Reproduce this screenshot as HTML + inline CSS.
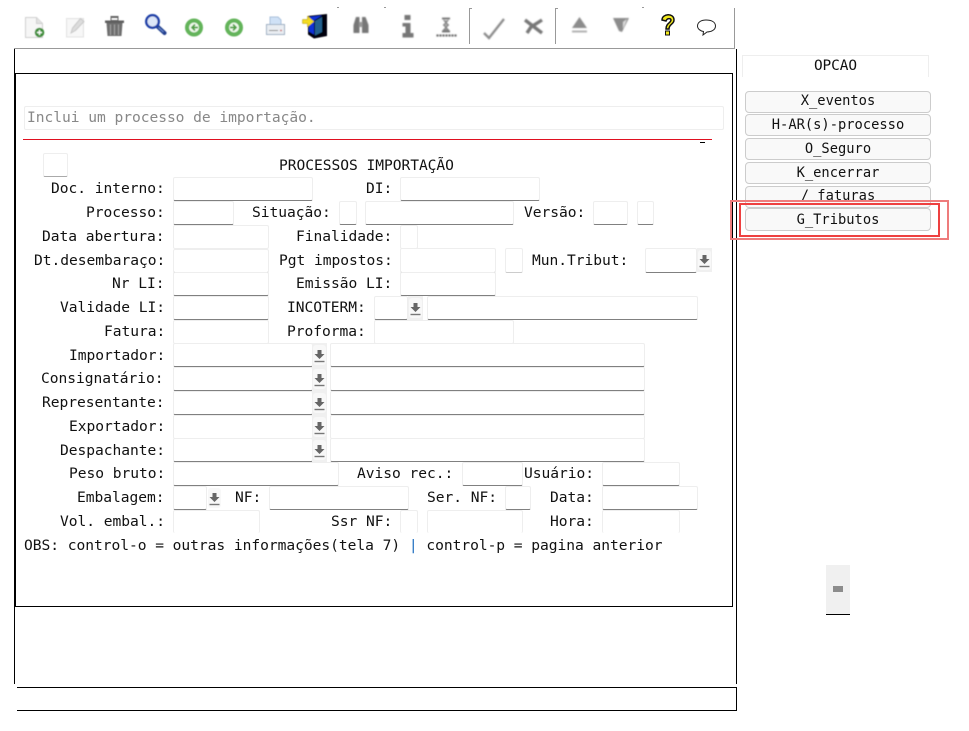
<!DOCTYPE html>
<html lang="pt"><head><meta charset="utf-8"><title>Processos Importação</title>
<style>
html,body{margin:0;padding:0;background:#fff}
#p{position:relative;width:969px;height:731px;overflow:hidden;background:#fff;font-family:"DejaVu Sans Mono","Liberation Mono",monospace;font-size:14.6px;letter-spacing:-.04px;color:#111}
#p div,#p span,#p svg{position:absolute;box-sizing:border-box}
.t{white-space:pre;line-height:18px;height:18px;margin-top:1px}
.f{background:#fff;border:1px solid #eee;border-radius:2px;border-bottom:1px solid #808080}
.l{border-bottom:1px solid #eee}
.n{border-bottom:0}
.b{background:#f0f0f0}
.b i{position:absolute;left:1px;top:2px;right:1px;bottom:2px;background:#f8f8f8;border-radius:3px}
.b svg{left:2px;top:6px}
.o{left:745px;width:186px;background:#f9f9f9;border:1px solid #ccc;border-radius:4px;text-align:center;font-size:13.75px;letter-spacing:0;height:22px}
.k{background:#000}
</style></head><body><div id="p">
<svg width="969" height="731" style="left:0;top:0" viewBox="0 0 969 731">
<defs>
<filter id="bl"><feGaussianBlur stdDeviation=".8"/></filter>
<filter id="bs"><feGaussianBlur stdDeviation=".4"/></filter>
<symbol id="dn" viewBox="0 0 11 14"><path d="M3.500 1h4v4h3L5.500 10 .5 5h3z" fill="#666"/><path d="M.5 12.500h10" stroke="#777" stroke-width="1.400"/></symbol>
</defs>
<g filter="url(#bs)">
<path d="M25.500 17.500h11l6 6v14h-17z" fill="#f6f6f6" stroke="#cfcfcf"/><path d="M36.500 17.500v6h6" fill="#e2e2e2" stroke="#cfcfcf"/>
<circle cx="39.500" cy="32.500" r="4.800" fill="#3f8f3a"/><path d="M37 32.500h5M39.500 30v5" stroke="#fff" stroke-width="1.400"/>
<path d="M66.500 18.500h17v18.500h-17z" fill="#f7f7f7" stroke="#e2e2e2"/><path d="M71 33l1.500-5 8-9.500 3.500 3-8.500 9z" fill="#dcdcdc" stroke="#c8c8c8"/>
<path d="M105 20.500h19v2.500h-19zM110.500 16h8v2h-8z" fill="#5f5f5f"/><path d="M111 17.500h7v3h-7z" fill="none" stroke="#666"/><path d="M106.500 23h16l-1 13h-14z" fill="#6e6e6e"/><path d="M110.500 24.500v10.500M114.500 24.500v10.500M118.500 24.500v10.500" stroke="#a4a4a4"/>
<path d="M157.500 26.500l7 6.500" stroke="#24408e" stroke-width="4" stroke-linecap="round"/><path d="M158.500 27.500l5 4.500" stroke="#6f8fd8" stroke-width="1"/><circle cx="152.500" cy="21.500" r="6.300" fill="#dce6f8" stroke="#1f3fa8" stroke-width="2.400"/>
<circle cx="194" cy="27.500" r="9" fill="#64b45a"/><circle cx="194" cy="27.500" r="5" fill="#eef8ea"/><path d="M198 27.500h-6M195 24.500l-3 3 3 3" stroke="#4f9e44" stroke-width="1.700" fill="none"/>
<circle cx="234" cy="27.500" r="9" fill="#64b45a"/><circle cx="234" cy="27.500" r="5" fill="#eef8ea"/><path d="M230 27.500h6M233 24.500l3 3-3 3" stroke="#4f9e44" stroke-width="1.700" fill="none"/>
<path d="M270 17h8l3 3v6h-11z" fill="#cfe1f6" stroke="#a9c0dc"/><path d="M266.500 24.500h18v10h-18z" fill="#e9edf2" stroke="#9fb0c4"/><path d="M269 30.500h9" stroke="#8a8a8a"/><path d="M280 30.500h2" stroke="#c66" stroke-width="1.300"/>
<path d="M308 16l19-2v22l-13 2.500-6-4z" fill="#06060c"/><path d="M309 17l13-1.500-8 5v14l-5-3z" fill="#0a30d8"/><path d="M315 21l7-4v15l-7 3.500z" fill="#23608f"/>
<path d="M302.500 19.500h5v-3.500l6.500 5.500-6.500 5.500v-3.500h-5z" fill="#f4dc20" stroke="#a89010" stroke-width=".5"/>
</g>
<g filter="url(#bl)" fill="#777">
<path d="M353.500 25l2.500-8h3.500v16h-6zM362 17h3.500l3 8v8h-6.500z"/><path d="M359 22h3.500v5h-3.500z" fill="#999"/>
<path d="M404.500 15h6v5h-6zM402.500 23h8v10h3v4.500h-11v-4.500h3v-6.500h-3z"/>
<path d="M442 18.500h8M442 31.500h8" stroke="#555" stroke-width="1.500" fill="none"/><path d="M443.500 20l5 5-5 5h5l-5-5 5-5" stroke="#777" fill="#aaa"/>
<path d="M436.500 35.500h21" stroke="#555" stroke-width="2" stroke-dasharray="2 1" fill="none"/>
<path d="M484 33l5 5 15-19" stroke="#8a8a8a" stroke-width="2.300" fill="none"/>
<path d="M525 20l17 13M527 33l4-6 11-7" stroke="#777" stroke-width="3.400" fill="none"/>
<path d="M579.500 17l7.500 11h-15z" fill="#8c8c8c"/><path d="M572 31.500h15" stroke="#b0b0b0" stroke-width="2"/>
<path d="M613 18h16l-7 14-3-1z" fill="#8c8c8c"/><path d="M623 22l4-3-4 10z" fill="#ddd"/>
</g>
<path d="M662 20c0-6.500 12-7.500 12 0 0 4.500-5 4-5 9h-3c0-6 5-6 5-9 0-2-4-2-5 1z" fill="#f2e91c" stroke="#111" stroke-width="1.500"/><path d="M665.500 31h4v4h-4z" fill="#f2e91c" stroke="#111"/>
<path d="M706 20c5.500 0 9.500 2 9.500 6s-4.500 6-8.500 6l-4 3 .5-3.500c-3-.5-6-2.500-6-5.500 0-4 4-6 8.500-6z" fill="#fff" stroke="#222"/>
<g fill="none" stroke="#999">
<path d="M14 48.500h720M734.500 8v41M469.500 8v36M470 8.500h2M555.500 8v36M556 8.500h2" />
</g>
<path d="M337 7.500h2M384 7.500h2M642 7.500h2" stroke="#999"/>
</svg>
<div class="k" style="left:14px;top:49px;width:1px;height:635px"></div>
<div class="k" style="left:736px;top:49px;width:1px;height:635px"></div>
<div style="left:15px;top:73px;width:718px;height:534px;border:1px solid #000"></div>
<div class="k" style="left:17px;top:687px;width:720px;height:1px"></div>
<div class="k" style="left:17px;top:710px;width:720px;height:1px"></div>
<div class="k" style="left:736px;top:687px;width:1px;height:24px"></div>

<div style="left:24px;top:106px;width:700px;height:24px;border:1px solid #eee;border-radius:2px"></div>
<div class="t" style="left:27px;top:108px;color:#888">Inclui um processo de importação.</div>
<div style="left:23px;top:139px;width:689px;height:1px;background:#e01020"></div>
<div class="k" style="left:700px;top:142px;width:5px;height:1px"></div>

<div class="f" style="left:43px;top:153px;width:25px;height:24px;border-bottom:1px solid #aaa"></div>
<div class="t" style="left:279px;top:156px">PROCESSOS IMPORTAÇÃO</div>

<div class="f" style="left:173px;top:177px;width:140px;height:24px"></div>
<div class="f" style="left:400px;top:177px;width:140px;height:24px"></div>
<div class="f" style="left:173px;top:201px;width:61px;height:24px"></div>
<div class="f" style="left:339px;top:201px;width:18px;height:24px"></div>
<div class="f" style="left:365px;top:201px;width:149px;height:24px"></div>
<div class="f" style="left:593px;top:201px;width:35px;height:24px"></div>
<div class="f" style="left:637px;top:201px;width:17px;height:24px"></div>
<div class="f l" style="left:173px;top:225px;width:96px;height:24px"></div>
<div class="f l" style="left:400px;top:225px;width:18px;height:24px"></div>
<div class="f" style="left:173px;top:249px;width:96px;height:24px"></div>
<div class="f" style="left:400px;top:248px;width:96px;height:25px"></div>
<div class="f" style="left:505px;top:248px;width:18px;height:25px;border-bottom:1px solid #ccc"></div>
<div class="f" style="left:645px;top:248px;width:52px;height:25px"></div>
<div class="b" style="left:697px;top:248px;width:15px;height:24px"><i></i><svg width="11" height="14"><use href="#dn"/></svg></div>
<div class="f" style="left:173px;top:272px;width:96px;height:24px"></div>
<div class="f" style="left:400px;top:272px;width:96px;height:24px"></div>
<div class="f" style="left:173px;top:296px;width:96px;height:24px"></div>
<div class="f" style="left:374px;top:296px;width:34px;height:24px"></div>
<div class="b" style="left:408px;top:296px;width:15px;height:24px"><i></i><svg width="11" height="14"><use href="#dn"/></svg></div>
<div class="f" style="left:427px;top:296px;width:271px;height:24px"></div>
<div class="f l" style="left:173px;top:320px;width:96px;height:24px"></div>
<div class="f l" style="left:374px;top:320px;width:140px;height:24px"></div>

<div class="f" style="left:173px;top:343px;width:140px;height:24px"></div>
<div class="b" style="left:312px;top:343px;width:15px;height:24px"><i></i><svg width="11" height="14"><use href="#dn"/></svg></div>
<div class="f" style="left:330px;top:343px;width:315px;height:24px"></div>
<div class="f" style="left:173px;top:367px;width:140px;height:24px"></div>
<div class="b" style="left:312px;top:367px;width:15px;height:24px"><i></i><svg width="11" height="14"><use href="#dn"/></svg></div>
<div class="f" style="left:330px;top:367px;width:315px;height:24px"></div>
<div class="f" style="left:173px;top:391px;width:140px;height:24px"></div>
<div class="b" style="left:312px;top:391px;width:15px;height:24px"><i></i><svg width="11" height="14"><use href="#dn"/></svg></div>
<div class="f" style="left:330px;top:391px;width:315px;height:24px"></div>
<div class="f l" style="left:173px;top:415px;width:140px;height:24px"></div>
<div class="b" style="left:312px;top:415px;width:15px;height:24px"><i></i><svg width="11" height="14"><use href="#dn"/></svg></div>
<div class="f l" style="left:330px;top:415px;width:315px;height:24px"></div>
<div class="f" style="left:173px;top:438px;width:140px;height:24px"></div>
<div class="b" style="left:312px;top:438px;width:15px;height:24px"><i></i><svg width="11" height="14"><use href="#dn"/></svg></div>
<div class="f" style="left:330px;top:438px;width:315px;height:24px"></div>

<div class="f" style="left:173px;top:462px;width:166px;height:24px"></div>
<div class="f" style="left:462px;top:462px;width:61px;height:24px"></div>
<div class="f" style="left:602px;top:462px;width:78px;height:24px"></div>
<div class="f" style="left:173px;top:486px;width:34px;height:24px"></div>
<div class="b" style="left:207px;top:486px;width:15px;height:24px;background:#fff"><i></i><svg width="11" height="14"><use href="#dn"/></svg></div>
<div class="f" style="left:269px;top:486px;width:140px;height:24px"></div>
<div class="f" style="left:505px;top:486px;width:26px;height:24px"></div>
<div class="f" style="left:602px;top:486px;width:96px;height:24px"></div>
<div class="f n" style="left:173px;top:510px;width:87px;height:23px"></div>
<div class="f n" style="left:400px;top:510px;width:18px;height:23px"></div>
<div class="f n" style="left:427px;top:510px;width:96px;height:23px"></div>
<div class="f n" style="left:602px;top:510px;width:78px;height:23px"></div>

<div class="t" style="left:51px;top:179px">Doc. interno:</div>
<div class="t" style="left:366px;top:179px">DI:</div>
<div class="t" style="left:86px;top:203px">Processo:</div>
<div class="t" style="left:252px;top:203px">Situação:</div>
<div class="t" style="left:524px;top:203px">Versão:</div>
<div class="t" style="left:42px;top:227px">Data abertura:</div>
<div class="t" style="left:296px;top:227px">Finalidade:</div>
<div class="t" style="left:34px;top:251px">Dt.desembaraço:</div>
<div class="t" style="left:279px;top:251px">Pgt impostos:</div>
<div class="t" style="left:532px;top:251px">Mun.Tribut:</div>
<div class="t" style="left:112px;top:274px">Nr LI:</div>
<div class="t" style="left:296px;top:274px">Emissão LI:</div>
<div class="t" style="left:60px;top:298px">Validade LI:</div>
<div class="t" style="left:287px;top:298px">INCOTERM:</div>
<div class="t" style="left:104px;top:322px">Fatura:</div>
<div class="t" style="left:287px;top:322px">Proforma:</div>
<div class="t" style="left:69px;top:346px">Importador:</div>
<div class="t" style="left:41px;top:369px">Consignatário:</div>
<div class="t" style="left:42px;top:393px">Representante:</div>
<div class="t" style="left:69px;top:417px">Exportador:</div>
<div class="t" style="left:60px;top:441px">Despachante:</div>
<div class="t" style="left:69px;top:464px">Peso bruto:</div>
<div class="t" style="left:357px;top:464px">Aviso rec.:</div>
<div class="t" style="left:524px;top:464px">Usuário:</div>
<div class="t" style="left:77px;top:488px">Embalagem:</div>
<div class="t" style="left:235px;top:488px">NF:</div>
<div class="t" style="left:427px;top:488px">Ser. NF:</div>
<div class="t" style="left:550px;top:488px">Data:</div>
<div class="t" style="left:60px;top:512px">Vol. embal.:</div>
<div class="t" style="left:331px;top:512px">Ssr NF:</div>
<div class="t" style="left:550px;top:512px">Hora:</div>
<div class="t" style="left:24px;top:536px">OBS: control-o = outras informações(tela 7) <span style="position:static;color:#2070c0">|</span> control-p = pagina anterior</div>

<div style="left:742px;top:55px;width:187px;height:22px;border:1px solid #eee;border-bottom:0"></div>
<div class="t" style="left:742px;top:56px;width:187px;text-align:center;font-size:14.4px">OPCAO</div>
<div class="o" style="top:91px;line-height:18px">X_eventos</div>
<div class="o" style="top:114px;line-height:21px">H-AR(s)-processo</div>
<div class="o" style="top:138px;line-height:21px">O_Seguro</div>
<div class="o" style="top:162px;line-height:21px">K_encerrar</div>
<div class="o" style="top:186px;line-height:19px">/_faturas</div>
<div class="o" style="top:208px;height:23px;line-height:23px">G_Tributos</div>
<div style="left:730px;top:200px;width:219px;height:40px;border:2px solid #ee7c7c"></div>
<div style="left:739px;top:203px;width:201px;height:34px;border:2px solid #ee4040"></div>

<div style="left:826px;top:565px;width:24px;height:49px;background:#f0f0f0"></div>
<div class="k" style="left:826px;top:614px;width:24px;height:1px"></div>
<div style="left:833px;top:586px;width:10px;height:6px;background:#8c8c8c"></div>
</div></body></html>
